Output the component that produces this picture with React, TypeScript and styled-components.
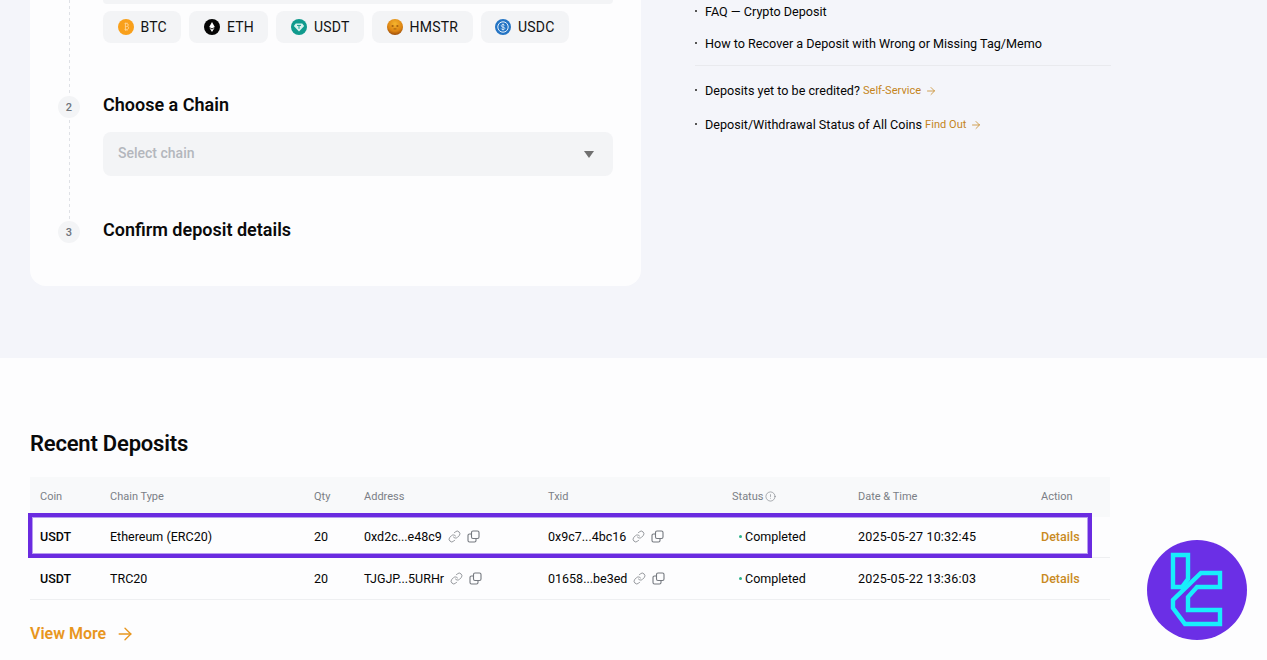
import React from 'react';
import styled, { createGlobalStyle } from 'styled-components';
import { ArrowRight, CircleAlert, Link as LinkIcon } from 'lucide-react';

const GlobalStyle = createGlobalStyle`
  html, body {
    margin: 0;
    padding: 0;
    height: 660px;
    overflow: hidden;
    background: #fdfdfe;
    font-family: Roboto, "Liberation Sans", sans-serif;
    color: #0a0a0a;
  }
`;

const Page = styled.div`
  position: relative;
  width: 1267px;
  height: 660px;
  overflow: hidden;
`;

const DepositArea = styled.section`
  display: flex;
  height: 358px;
  padding: 0 30px;
  box-sizing: border-box;
  background: #f4f5fa;
`;

const Card = styled.div`
  display: flex;
  flex-direction: column;
  width: 611px;
  height: 286px;
  box-sizing: border-box;
  padding-left: 28px;
  background: #fdfdfe;
  border-radius: 0 0 16px 16px;
`;

const Step = styled.div<{ $height: number }>`
  display: grid;
  grid-template-columns: 45px 510px;
  height: ${({ $height }) => $height}px;
`;

const Rail = styled.div<{ $last?: boolean }>`
  width: 22px;
  background: ${({ $last }) =>
    $last
      ? 'none'
      : 'repeating-linear-gradient(to bottom, #dfe1e6 0 3px, transparent 3px 6px) 11px 0 / 1px 100% no-repeat'};
`;

const StepNumber = styled.div`
  display: flex;
  align-items: center;
  justify-content: center;
  width: 22px;
  height: 22px;
  border-radius: 50%;
  background: #f3f4f6;
  color: #6f747c;
  font-size: 11px;
  font-weight: 500;
`;

const SearchEdge = styled.div`
  height: 4px;
  margin-bottom: 7px;
  background: #f3f4f6;
  border-radius: 0 0 8px 8px;
`;

const CoinRow = styled.div`
  display: flex;
  gap: 8px;
`;

const CoinPill = styled.div`
  display: flex;
  align-items: center;
  gap: 7px;
  height: 32px;
  padding: 0 14.5px;
  background: #f3f4f6;
  border-radius: 8px;
  font-size: 14px;
  letter-spacing: 0.2px;
  color: #121212;
`;

const StepTitle = styled.h3`
  margin: -3px 0 0;
  font-size: 18px;
  line-height: 24px;
  font-weight: 600;
  color: #0a0a0a;
`;

const ChainSelect = styled.div`
  display: flex;
  align-items: center;
  justify-content: space-between;
  height: 44px;
  margin-top: 15px;
  padding: 0 19px 2px 15px;
  box-sizing: border-box;
  background: #f3f4f6;
  border-radius: 8px;
  font-size: 14px;
  font-weight: 500;
  color: #b4b7bd;
`;

const Caret = styled.span`
  width: 0;
  height: 0;
  margin-top: 2px;
  border-left: 5px solid transparent;
  border-right: 5px solid transparent;
  border-top: 7px solid #707070;
`;

const HelpPanel = styled.aside`
  width: 416px;
  margin-left: 54px;
  padding-top: 1px;
`;

const HelpItem = styled.div<{ $gap?: number }>`
  display: flex;
  align-items: center;
  height: 20px;
  margin-bottom: ${({ $gap }) => $gap ?? 12}px;
  font-size: 12.6px;
  color: #050505;

  &::before {
    content: '';
    flex: 0 0 2px;
    width: 2px;
    height: 2px;
    margin-right: 8px;
    background: #555;
  }
`;

const HelpDivider = styled.div`
  height: 1px;
  margin: 0 0 14px;
  background: #e9eaee;
`;

const HelpAction = styled.span`
  display: inline-flex;
  align-items: center;
  gap: 4px;
  margin-left: 3px;
  padding-top: 1px;
  font-size: 11px;
  letter-spacing: 0.05px;
  color: #c4841c;
`;

const RecordsArea = styled.section`
  padding: 73px 0 0 30px;
`;

const RecordsTitle = styled.h2`
  margin: 0 0 20px;
  font-size: 22px;
  line-height: 26px;
  font-weight: 600;
  letter-spacing: -0.2px;
  color: #0a0a0a;
`;

const Table = styled.div`
  width: 1080px;
`;

const TableRow = styled.div<{ $head?: boolean; $height: number; $lift: number }>`
  display: grid;
  grid-template-columns: 70px 204px 50px 184px 184px 126px 183px 1fr;
  align-items: center;
  height: ${({ $height }) => $height}px;
  box-sizing: border-box;
  padding: 0 0 ${({ $lift }) => $lift}px 10px;
  font-size: ${({ $head }) => ($head ? 11 : 12.5)}px;
  color: ${({ $head }) => ($head ? '#7b7f86' : '#050505')};
  background: ${({ $head }) => ($head ? '#f8f9fa' : 'transparent')};
  border-bottom: ${({ $head }) => ($head ? 'none' : '1px solid #eeeff1')};
`;

const Cell = styled.div`
  display: flex;
  align-items: center;
  white-space: nowrap;
`;

const CoinCell = styled(Cell)`
  font-weight: 500;
`;

const DateCell = styled(Cell)`
  letter-spacing: 0.2px;
`;

const CopyTools = styled.span`
  display: inline-flex;
  align-items: center;
  gap: 6px;
  margin-left: 6px;
  color: #75797f;
`;

const StatusDot = styled.span`
  width: 3px;
  height: 3px;
  margin: 0 3px 0 7px;
  border-radius: 50%;
  background: #2bb38a;
`;

const DetailsLink = styled.span`
  font-weight: 500;
  color: #c98a22;
`;

const HeadHint = styled.span`
  display: inline-flex;
  margin-left: 2px;
  color: #6b6f76;
`;

const ViewMore = styled.div`
  display: flex;
  align-items: center;
  gap: 9px;
  margin-top: 22px;
  font-size: 16px;
  line-height: 24px;
  font-weight: 600;
  color: #e8961e;
`;

const HighlightBox = styled.div`
  position: absolute;
  left: 28px;
  top: 513px;
  width: 1064px;
  height: 45px;
  box-sizing: border-box;
  border: 4px solid #6a2be0;
  box-shadow: inset 0 0 0 1px #b79cf0;
`;

const Badge = styled.div`
  position: absolute;
  left: 1147px;
  top: 540px;
  width: 100px;
  height: 100px;
`;

const CoinIconSvg = ({ coin }: { coin: string }) => {
  if (coin === 'BTC') {
    return (
      <svg width="16" height="16" viewBox="0 0 16 16">
        <circle cx="8" cy="8" r="8" fill="#f9a01b" />
        <path d="M6.600 4.600h2.200c1 0 1.500.6 1.500 1.400 0 .7-.4 1.100-1 1.300.8.1 1.300.7 1.300 1.500 0 1-.7 1.600-1.700 1.600H6.600M7.400 4.600v6.200M7.600 3.600v1M9 3.600v1M7.600 10.800v1M9 10.800v1M7.400 7.500h1.400" fill="none" stroke="#ffd596" strokeWidth="0.9" />
      </svg>
    );
  }
  if (coin === 'ETH') {
    return (
      <svg width="16" height="16" viewBox="0 0 16 16">
        <circle cx="8" cy="8" r="8" fill="#050505" />
        <path d="M8 3l2.800 4.900L8 9.500 5.200 7.900z" fill="#fff" />
        <path d="M8 10.400l2.600-1.600L8 13 5.400 8.800z" fill="#fff" />
      </svg>
    );
  }
  if (coin === 'USDT') {
    return (
      <svg width="16" height="16" viewBox="0 0 16 16">
        <circle cx="8" cy="8" r="8" fill="#109a8d" />
        <path d="M4.800 4.400h6.400l2 2.600L8 12.400 2.800 7z" fill="#d8f3ef" />
        <path d="M6 6.400h4M8 6.400v3.400" stroke="#109a8d" strokeWidth="1" fill="none" />
      </svg>
    );
  }
  if (coin === 'HMSTR') {
    return (
      <svg width="16" height="16" viewBox="0 0 16 16">
        <defs>
          <radialGradient id="hmstr" cx="50%" cy="30%" r="72%">
            <stop offset="0%" stopColor="#f5b52e" />
            <stop offset="65%" stopColor="#dd8412" />
            <stop offset="100%" stopColor="#96480a" />
          </radialGradient>
        </defs>
        <circle cx="8" cy="8" r="8" fill="url(#hmstr)" />
        <circle cx="5.600" cy="7" r="1.100" fill="#a8620f" />
        <circle cx="10.400" cy="7" r="1.100" fill="#a8620f" />
        <path d="M6.600 9.200h2.800v1.400H6.600z" fill="#b76d12" />
      </svg>
    );
  }
  return (
    <svg width="16" height="16" viewBox="0 0 16 16">
      <circle cx="8" cy="8" r="8" fill="#2474c4" />
      <circle cx="8" cy="8" r="5.200" fill="none" stroke="#e8f2fb" strokeWidth="1" />
      <path d="M9.700 6.500C9.400 5.800 8.800 5.500 8 5.500c-1 0-1.700.5-1.700 1.300 0 1.900 3.500.8 3.500 2.500 0 .8-.8 1.300-1.800 1.300-.9 0-1.600-.4-1.800-1.100M8 4.600v6.800" fill="none" stroke="#e8f2fb" strokeWidth="0.8" />
    </svg>
  );
};

const CopyIcon = () => (
  <svg width="13" height="13" viewBox="0 0 13 13" fill="none" stroke="currentColor" strokeWidth="1.1">
    <rect x="4.500" y="1" width="7.500" height="7.500" rx="1.500" />
    <path d="M4.500 4H2.500A1.500 1.500 0 0 0 1 5.500V10.500A1.500 1.500 0 0 0 2.500 12H7.500A1.500 1.500 0 0 0 9 10.500V8.500" />
  </svg>
);

const TethaLogo = () => (
  <svg width="100" height="100" viewBox="0 0 100 100">
    <circle cx="50" cy="50" r="50" fill="#6b2fe6" />
    <g fill="none" stroke="#18eefc" strokeWidth="4.4" strokeLinejoin="miter">
      <path d="M26 15H41V39L35 47H26Z" />
      <path d="M73 33H54L26 60V68L38 84H73V70H41V57L50 47H73Z" />
    </g>
  </svg>
);

const COINS = ['BTC', 'ETH', 'USDT', 'HMSTR', 'USDC'];

const RECORDS = [
  {
    coin: 'USDT',
    chain: 'Ethereum (ERC20)',
    qty: '20',
    address: '0xd2c...e48c9',
    txid: '0x9c7...4bc16',
    date: '2025-05-27 10:32:45',
    height: 41,
    lift: 2,
  },
  {
    coin: 'USDT',
    chain: 'TRC20',
    qty: '20',
    address: 'TJGJP...5URHr',
    txid: '01658...be3ed',
    date: '2025-05-22 13:36:03',
    height: 42,
    lift: 0,
  },
];

const Tools = () => (
  <CopyTools>
    <LinkIcon size={13} strokeWidth={1.4} />
    <CopyIcon />
  </CopyTools>
);

export default function App() {
  return (
    <Page>
      <GlobalStyle />
      <DepositArea>
        <Card>
          <Step $height={96}>
            <Rail />
            <div>
              <SearchEdge />
              <CoinRow>
                {COINS.map((coin) => (
                  <CoinPill key={coin}>
                    <CoinIconSvg coin={coin} />
                    {coin}
                  </CoinPill>
                ))}
              </CoinRow>
            </div>
          </Step>
          <Step $height={125}>
            <Rail>
              <StepNumber>2</StepNumber>
            </Rail>
            <div>
              <StepTitle>Choose a Chain</StepTitle>
              <ChainSelect>
                Select chain
                <Caret />
              </ChainSelect>
            </div>
          </Step>
          <Step $height={65}>
            <Rail $last>
              <StepNumber>3</StepNumber>
            </Rail>
            <StepTitle>Confirm deposit details</StepTitle>
          </Step>
        </Card>
        <HelpPanel>
          <HelpItem>FAQ — Crypto Deposit</HelpItem>
          <HelpItem>How to Recover a Deposit with Wrong or Missing Tag/Memo</HelpItem>
          <HelpDivider />
          <HelpItem $gap={14}>
            Deposits yet to be credited?
            <HelpAction>
              Self-Service <ArrowRight size={12} strokeWidth={1.5} />
            </HelpAction>
          </HelpItem>
          <HelpItem>
            Deposit/Withdrawal Status of All Coins
            <HelpAction>
              Find Out <ArrowRight size={12} strokeWidth={1.5} />
            </HelpAction>
          </HelpItem>
        </HelpPanel>
      </DepositArea>
      <RecordsArea>
        <RecordsTitle>Recent Deposits</RecordsTitle>
        <Table>
          <TableRow $head $height={40} $lift={2}>
            <Cell>Coin</Cell>
            <Cell>Chain Type</Cell>
            <Cell>Qty</Cell>
            <Cell>Address</Cell>
            <Cell>Txid</Cell>
            <Cell>
              Status
              <HeadHint>
                <CircleAlert size={11} strokeWidth={1.2} />
              </HeadHint>
            </Cell>
            <Cell>Date &amp; Time</Cell>
            <Cell>Action</Cell>
          </TableRow>
          {RECORDS.map((record) => (
            <TableRow key={record.date} $height={record.height} $lift={record.lift}>
              <CoinCell>{record.coin}</CoinCell>
              <Cell>{record.chain}</Cell>
              <Cell>{record.qty}</Cell>
              <Cell>
                {record.address}
                <Tools />
              </Cell>
              <Cell>
                {record.txid}
                <Tools />
              </Cell>
              <Cell>
                <StatusDot />
                Completed
              </Cell>
              <DateCell>{record.date}</DateCell>
              <Cell>
                <DetailsLink>Details</DetailsLink>
              </Cell>
            </TableRow>
          ))}
        </Table>
        <ViewMore>
          View More <ArrowRight size={20} strokeWidth={1.6} />
        </ViewMore>
      </RecordsArea>
      <HighlightBox />
      <Badge>
        <TethaLogo />
      </Badge>
    </Page>
  );
}
